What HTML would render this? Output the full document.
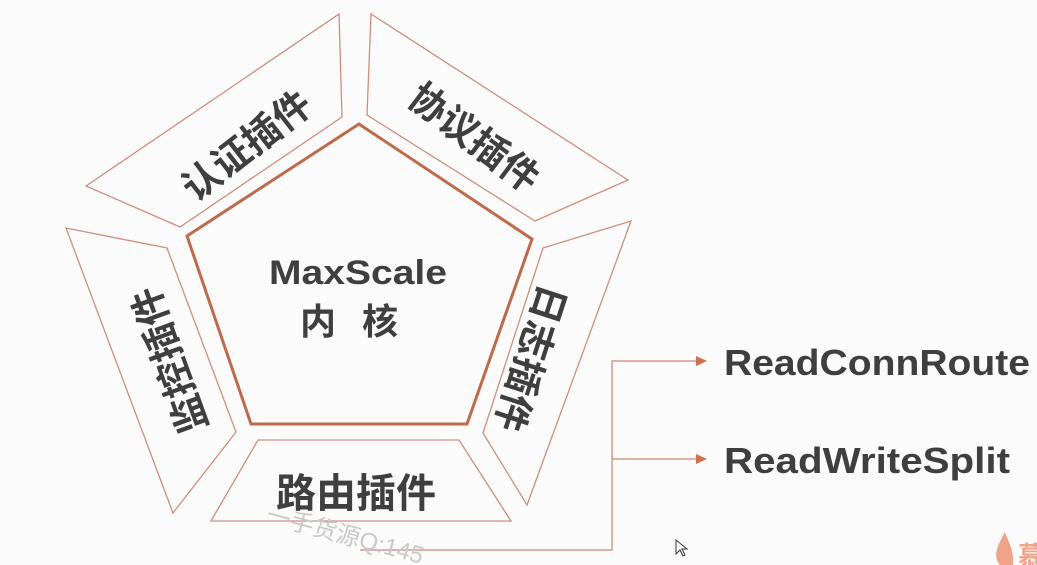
<!DOCTYPE html>
<html><head><meta charset="utf-8"><style>
html,body{margin:0;padding:0;background:#fbfbfb;}
svg{display:block}
text{font-family:"Liberation Sans","Noto Sans CJK SC",sans-serif;font-weight:bold;fill:#3f3f3f}
</style></head><body>
<svg width="1037" height="565" viewBox="0 0 1037 565">
<g fill="none" stroke="#cf8f7c" stroke-width="1.3">
<polygon points="86,186 339,14 342,117 180,227"/>
<polygon points="371,14 628,180 535,221 367,115"/>
<polygon points="66,228 167,248 236,432 173,513"/>
<polygon points="631,221 543,248 483,433 527,505"/>
<polygon points="258,440 459,440 511,521 211,521"/>
</g>
<polygon points="359,124 532,239 467,424 251,424 187,236" fill="none" stroke="#c06a4c" stroke-width="3"/>
<text x="358" y="284" font-size="34" text-anchor="middle" textLength="178" lengthAdjust="spacingAndGlyphs">MaxScale</text>
<text x="300" y="334" font-size="36">内</text>
<text x="362" y="334" font-size="36">核</text>
<text x="356" y="507" font-size="40" text-anchor="middle">路由插件</text>
<text transform="translate(247,146) rotate(-38)" font-size="38" text-anchor="middle" dy="13">认证插件</text>
<text transform="translate(474,138) rotate(37)" font-size="38" text-anchor="middle" dy="13">协议插件</text>
<text transform="translate(170,360) rotate(-110)" font-size="38" text-anchor="middle" dy="13">监控插件</text>
<text transform="translate(530,358) rotate(108)" font-size="38" text-anchor="middle" dy="13">日志插件</text>
<g stroke="#d79a86" stroke-width="1.5" fill="none">
<polyline points="360,550 612,550 612,361 698,361"/>
<line x1="612" y1="459" x2="698" y2="459"/>
</g>
<polygon points="696,356 707,361 696,366" fill="#d0704f"/>
<polygon points="696,454 707,459 696,464" fill="#d0704f"/>
<text x="724" y="375" font-size="36" textLength="306" lengthAdjust="spacingAndGlyphs">ReadConnRoute</text>
<text x="724" y="473" font-size="36" textLength="286" lengthAdjust="spacingAndGlyphs">ReadWriteSplit</text>
<text transform="translate(265,522) rotate(15)" font-size="24" style="font-weight:normal;fill:#c9c9c9">一手货源Q:145</text>
<path d="M676 540 L676 554 L680 550 L683 556 L685 555 L682 549 L687 549 Z" fill="#fff" stroke="#333" stroke-width="1"/>
<path d="M1000 565 C992 555 998 545 1005 532 C1008 542 1014 548 1013 565 Z" fill="#f0a48a"/>
<text x="1018" y="565" font-size="26" style="fill:#f0a48a">慕</text>
</svg>
</body></html>
